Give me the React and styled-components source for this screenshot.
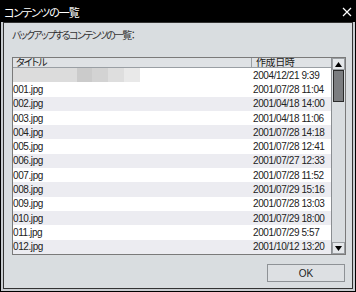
import React from 'react';
import styled, { createGlobalStyle } from 'styled-components';

const rows = [
  { name: '', date: '2004/12/21 9:39', hidden: true },
  { name: '001.jpg', date: '2001/07/28 11:04' },
  { name: '002.jpg', date: '2001/04/18 14:00' },
  { name: '003.jpg', date: '2001/04/18 11:06' },
  { name: '004.jpg', date: '2001/07/28 14:18' },
  { name: '005.jpg', date: '2001/07/28 12:41' },
  { name: '006.jpg', date: '2001/07/27 12:33' },
  { name: '007.jpg', date: '2001/07/28 11:52' },
  { name: '008.jpg', date: '2001/07/29 15:16' },
  { name: '009.jpg', date: '2001/07/28 13:03' },
  { name: '010.jpg', date: '2001/07/29 18:00' },
  { name: '011.jpg', date: '2001/07/29 5:57' },
  { name: '012.jpg', date: '2001/10/12 13:20' },
];

const mosaic = ['#dcdcdc', '#dcdcdc', '#dcdcdc', '#dcdcdc', '#cbcbcb', '#d3d3d3', '#dedede', '#e9e9e9'];

const GlobalStyle = createGlobalStyle`
  body {
    margin: 0;
    background: #fff;
    font-family: "Liberation Sans", "Noto Sans CJK JP", sans-serif;
    font-feature-settings: "palt" 1;
  }
`;

const Window = styled.div`
  width: 356px;
  height: 292px;
  box-sizing: border-box;
  border: 1px solid #000;
  background: #c8ccd0;
  padding: 0 2px 2px;
  display: flex;
  flex-direction: column;
`;

const TitleBar = styled.div`
  height: 21px;
  margin: 0 -2px;
  padding: 0 3px;
  background: #000;
  color: #fff;
  display: flex;
  align-items: center;
  justify-content: space-between;
  font-size: 11px;
  letter-spacing: -1px;
`;

const Body = styled.div`
  flex: 1;
  border: 1px solid #333;
  background: #d9dde0;
  padding: 7px 6px 0 8px;
  display: flex;
  flex-direction: column;
`;

const Label = styled.div`
  height: 12px;
  line-height: 12px;
  font-size: 10px;
  color: #333;
  letter-spacing: -1.7px;
`;

const Table = styled.div`
  margin-top: 15px;
  height: 198px;
  box-sizing: border-box;
  border: 1px solid #7a7a7a;
  background: #fff;
  display: grid;
  grid-template-columns: 1fr 14px;
`;

const List = styled.div`
  display: flex;
  flex-direction: column;
  min-width: 0;
`;

const HeaderRow = styled.div`
  height: 9px;
  border-bottom: 1px solid #9a9fa4;
  background: #dfe2e5;
  display: grid;
  grid-template-columns: 238px 1fr;
  font-size: 10px;
  line-height: 9px;
  color: #222;
`;

const HeaderCell = styled.div`
  padding-left: ${p => p.$pad}px;
  border-left: ${p => (p.$divider ? '1px solid #9a9fa4' : 'none')};
  letter-spacing: ${p => (p.$divider ? '-0.4px' : '-1px')};
  overflow: hidden;
`;

const Row = styled.div`
  height: 14.3px;
  display: grid;
  grid-template-columns: 238px 1fr;
  align-items: center;
  background: ${p => (p.$alt ? '#ececf1' : '#fff')};
  font-size: 10px;
  letter-spacing: -0.4px;
  color: #222;
`;

const Cell = styled.div`
  padding-left: ${p => p.$pad}px;
  white-space: nowrap;
  overflow: hidden;
`;

const Mosaic = styled.div`
  display: flex;
  height: 14.3px;
  width: 127px;
`;

const Block = styled.div`
  flex: 1;
  background: ${p => p.$c};
`;

const Scrollbar = styled.div`
  border-left: 1px solid #8a8e92;
  background: #d9dde0;
  display: flex;
  flex-direction: column;
`;

const ArrowButton = styled.div`
  height: 10px;
  border: 1px solid #9a9ea2;
  background: #e4e7ea;
  display: flex;
  align-items: center;
  justify-content: center;
  margin-top: ${p => (p.$down ? 'auto' : '0')};
`;

const Thumb = styled.div`
  margin: 0 1px;
  height: 30px;
  border: 1px solid #2a2a2a;
  background: #7b7d80;
`;

const Footer = styled.div`
  margin-top: 9px;
  display: flex;
  justify-content: flex-end;
  padding-right: 1px;
`;

const Button = styled.div`
  width: 78px;
  height: 18px;
  box-sizing: border-box;
  border: 1px solid #8e9296;
  background: #dde0e3;
  display: flex;
  align-items: center;
  justify-content: center;
  font-size: 10px;
  color: #222;
`;

const Triangle = ({ down }) => (
  <svg width="7" height="5" viewBox="0 0 7 5">
    <polygon points={down ? '0,0 7,0 3.5,5' : '0,5 7,5 3.5,0'} fill="#000" />
  </svg>
);

const App = () => (
  <>
    <GlobalStyle />
    <Window>
      <TitleBar>
        <span>コンテンツの一覧</span>
        <svg width="10" height="10" viewBox="0 0 10 10">
          <path d="M1 1 L9 9 M9 1 L1 9" stroke="#fff" strokeWidth="1.2" />
        </svg>
      </TitleBar>
      <Body>
        <Label>バックアップするコンテンツの一覧：</Label>
        <Table>
          <List>
            <HeaderRow>
              <HeaderCell $pad={3}>タイトル</HeaderCell>
              <HeaderCell $pad={4} $divider>作成日時</HeaderCell>
            </HeaderRow>
            {rows.map((r, i) => (
              <Row key={i} $alt={i > 0 && i % 2 === 0}>
                <Cell $pad={0}>
                  {r.hidden ? (
                    <Mosaic>
                      {mosaic.map((c, j) => <Block key={j} $c={c} />)}
                    </Mosaic>
                  ) : r.name}
                </Cell>
                <Cell $pad={2}>{r.date}</Cell>
              </Row>
            ))}
          </List>
          <Scrollbar>
            <ArrowButton><Triangle /></ArrowButton>
            <Thumb />
            <ArrowButton $down><Triangle down /></ArrowButton>
          </Scrollbar>
        </Table>
        <Footer>
          <Button>OK</Button>
        </Footer>
      </Body>
    </Window>
  </>
);

export default App;
